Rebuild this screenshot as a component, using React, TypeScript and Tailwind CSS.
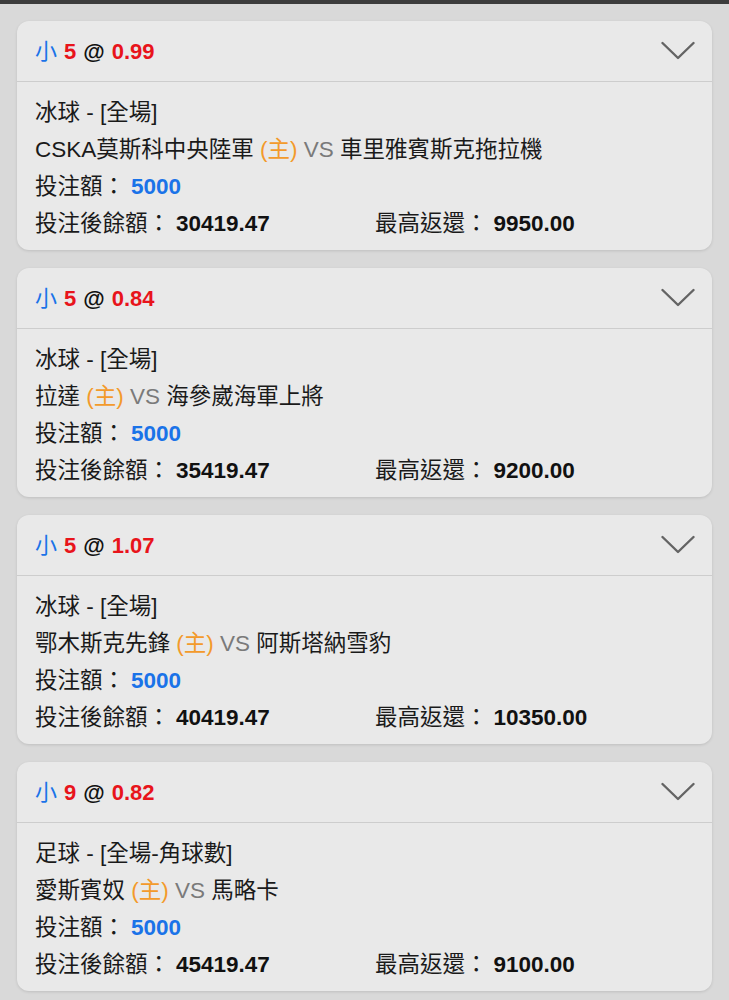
type Bet = {
  id: string
  line: string
  odds: string
  sport: string
  home: string
  away: string
  stake: string
  balance: string
  maxReturn: string
}

const BETS: Bet[] = [
  {
    id: "b1",
    line: "5",
    odds: "0.99",
    sport: "冰球 - [全場]",
    home: "CSKA莫斯科中央陸軍",
    away: "車里雅賓斯克拖拉機",
    stake: "5000",
    balance: "30419.47",
    maxReturn: "9950.00",
  },
  {
    id: "b2",
    line: "5",
    odds: "0.84",
    sport: "冰球 - [全場]",
    home: "拉達",
    away: "海參崴海軍上將",
    stake: "5000",
    balance: "35419.47",
    maxReturn: "9200.00",
  },
  {
    id: "b3",
    line: "5",
    odds: "1.07",
    sport: "冰球 - [全場]",
    home: "鄂木斯克先鋒",
    away: "阿斯塔納雪豹",
    stake: "5000",
    balance: "40419.47",
    maxReturn: "10350.00",
  },
  {
    id: "b4",
    line: "9",
    odds: "0.82",
    sport: "足球 - [全場-角球數]",
    home: "愛斯賓奴",
    away: "馬略卡",
    stake: "5000",
    balance: "45419.47",
    maxReturn: "9100.00",
  },
]

function Chevron() {
  return (
    <svg width="34" height="20" viewBox="0 0 34 20" fill="none" aria-hidden>
      <polyline
        points="1.5,2 17,17 32.5,2"
        stroke="#646464"
        strokeWidth="2.4"
        strokeLinecap="round"
        strokeLinejoin="round"
      />
    </svg>
  )
}

function BetCard({ bet }: { bet: Bet }) {
  return (
    <div className="overflow-hidden rounded-[12px] bg-[#e9e9e9] shadow-[0_1px_3px_rgba(0,0,0,0.12)]">
      <div className="flex h-[61px] items-center justify-between border-b border-[#cdcdcd] pl-[18px] pr-[17px]">
        <div className="flex items-center gap-[7px] text-[22px] font-bold">
          <span className="font-normal text-[#1a73e8]">小</span>
          <span className="text-[#e8141b]">{bet.line}</span>
          <span className="text-[#111]">@</span>
          <span className="text-[#e8141b]">{bet.odds}</span>
        </div>
        <Chevron />
      </div>
      <div className="px-[18px] pb-[8px] pt-[12px] text-[22.5px] leading-[37px] text-[#1a1a1a]">
        <p>{bet.sport}</p>
        <p>
          {bet.home} <span className="text-[#f39a2b]">(主)</span>{" "}
          <span className="text-[#7a7a7a]">VS</span> {bet.away}
        </p>
        <p>
          投注額：<span className="ml-[6px] font-bold text-[#1a73e8]">{bet.stake}</span>
        </p>
        <div className="flex">
          <p className="w-[340px]">
            投注後餘額：<span className="ml-[6px] font-bold text-[#111]">{bet.balance}</span>
          </p>
          <p>
            最高返還：<span className="ml-[6px] font-bold text-[#111]">{bet.maxReturn}</span>
          </p>
        </div>
      </div>
    </div>
  )
}

export default function App() {
  return (
    <div
      className="min-h-screen bg-[#d9d9d9]"
      style={{ fontFamily: '"Liberation Sans", "Noto Sans CJK TC", sans-serif' }}
    >
      <div className="h-[4px] bg-[#3c3c3c]" />
      <div className="flex flex-col gap-[18px] px-[17px] pb-[10px] pt-[17px]">
        {BETS.map((b) => (
          <BetCard key={b.id} bet={b} />
        ))}
      </div>
    </div>
  )
}
